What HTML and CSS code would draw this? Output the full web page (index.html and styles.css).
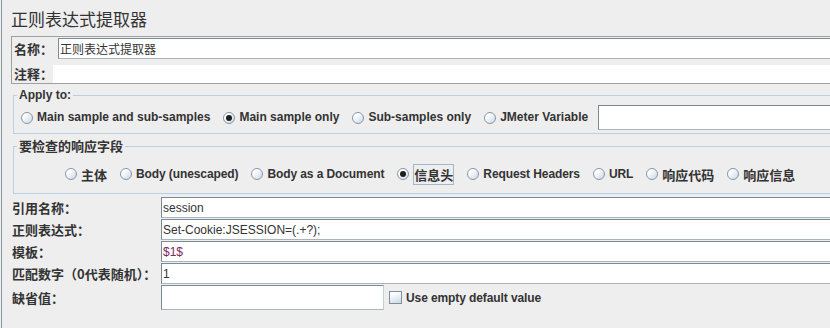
FILE: index.html
```html
<!DOCTYPE html>
<html lang="zh-CN">
<head>
<meta charset="UTF-8"><meta name="viewport" content="width=device-width,initial-scale=1">
<title>正则表达式提取器</title>
<link rel="stylesheet" href="styles.css">
</head>
<body>
<div class="app">
  <h1 class="title">正则表达式提取器</h1>

  <div class="name-panel">
    <div class="row name-row">
      <span class="lbl zh">名称：</span>
      <input class="field" value="正则表达式提取器">
    </div>
    <div class="row comment-row">
      <span class="lbl zh">注释：</span>
      <div class="comment"></div>
    </div>
  </div>

  <fieldset class="group apply">
    <legend>Apply to:</legend>
    <div class="radios">
      <label class="radio"><span class="dot"></span>Main sample and sub-samples</label>
      <label class="radio"><span class="dot on"></span>Main sample only</label>
      <label class="radio"><span class="dot"></span>Sub-samples only</label>
      <label class="radio last"><span class="dot"></span>JMeter Variable</label>
      <input class="field var">
    </div>
  </fieldset>

  <fieldset class="group resp">
    <legend class="zh">要检查的响应字段</legend>
    <div class="radios">
      <label class="radio"><span class="dot"></span><span class="zh">主体</span></label>
      <label class="radio"><span class="dot"></span>Body (unescaped)</label>
      <label class="radio"><span class="dot"></span>Body as a Document</label>
      <label class="radio"><span class="dot on"></span><span class="zh focus">信息头</span></label>
      <label class="radio"><span class="dot"></span>Request Headers</label>
      <label class="radio"><span class="dot"></span>URL</label>
      <label class="radio"><span class="dot"></span><span class="zh">响应代码</span></label>
      <label class="radio"><span class="dot"></span><span class="zh">响应信息</span></label>
    </div>
  </fieldset>

  <div class="form">
    <span class="lbl zh">引用名称：</span>
    <input class="field" value="session">
    <span class="lbl zh">正则表达式：</span>
    <input class="field" value="Set-Cookie:JSESSION=(.+?);">
    <span class="lbl zh">模板：</span>
    <input class="field tpl" value="$1$">
    <span class="lbl zh">匹配数字（0代表随机）：</span>
    <input class="field" value="1">
    <span class="lbl zh">缺省值：</span>
    <div class="default-row">
      <input class="field short">
      <label class="check"><span class="box"></span>Use empty default value</label>
    </div>
  </div>
</div>
</body>
</html>
```

FILE: styles.css
```css
html,body{margin:0;height:100%;overflow:hidden}
body{background:#eee;color:#333;font:bold 12px "Liberation Sans","Noto Sans CJK SC",sans-serif}
.app{width:850px;height:328px;margin-left:1px;border-left:1px solid #8a99a8}
.zh{font-size:13px;font-family:"Noto Sans CJK SC",sans-serif;letter-spacing:0}

.title{margin:0;padding:8px 0 0 9px;font:normal 17px/21px "Noto Sans CJK SC",sans-serif;color:#333}

.field{box-sizing:border-box;margin:0;padding:0 0 0 1px;border:1px solid #7a8a99;border-bottom-color:#a9b4bf;border-right:none;background:#fff;color:#333;font:normal 12px "Liberation Sans","Noto Sans CJK SC",sans-serif;outline:none}

.name-panel{margin:7px 0 0 9px;border:1px solid #a0a0a0;border-right:none;padding:1px 0 0 1px;display:flex;flex-direction:column;gap:6px}
.row{display:flex;align-items:center}
.row .lbl{padding-left:1px;box-sizing:border-box;line-height:18px}
.name-row{height:21px}
.name-row .lbl{width:45px}
.name-row .field{flex:1;height:21px}
.comment-row{height:18px}
.comment-row .lbl{width:40px}
.comment{flex:1;height:18px;background:#fff}

.group{margin:4px 0 0 11px;padding:0;min-width:0;border:1px solid #b8cfe5;border-right:none}
.group legend{margin-left:3px;padding:0 2px;line-height:14px}
.group legend.zh{line-height:16px}
.radios{display:flex;align-items:center}
.apply .radios{height:25px;padding:3px 0 3px 7px}
.resp .radios{height:24px;padding:8px 0 7px 51px}
.radio{display:flex;align-items:center;gap:4px;margin-right:13px;white-space:nowrap;line-height:19px}
.resp .radio{letter-spacing:-0.1px}
.radio.last{margin-right:10px}
.var{flex:1;height:25px}
.focus{border:1px solid #a3b7cb;padding:0;line-height:19px}

.dot{position:relative;flex:none;box-sizing:border-box;width:12px;height:12px;border-radius:50%;border:1px solid #8696a8;background:linear-gradient(135deg,#fff 25%,#cbd7e3)}
.dot.on::after{content:"";position:absolute;left:2px;top:2px;width:6px;height:6px;border-radius:50%;background:#1e1e1e}

.form{margin:3px 0 0 10px;display:grid;grid-template-columns:149px 1fr;grid-template-rows:21px 21px 21px 21px 25px;row-gap:1px;align-items:center}
.form .lbl{line-height:21px;white-space:nowrap}
.form .field{height:21px}
.tpl{color:#7a2a62}
.default-row{display:flex;align-items:center;height:25px}
.form .field.short{width:223px;height:25px;border-right:1px solid #c4ccd4}
.check{display:flex;align-items:center;gap:4px;margin-left:5px;letter-spacing:-0.1px}
.box{box-sizing:border-box;width:13px;height:13px;border:1px solid #7f8fa0;background:linear-gradient(160deg,#fff 15%,#cdd8e4)}
```
